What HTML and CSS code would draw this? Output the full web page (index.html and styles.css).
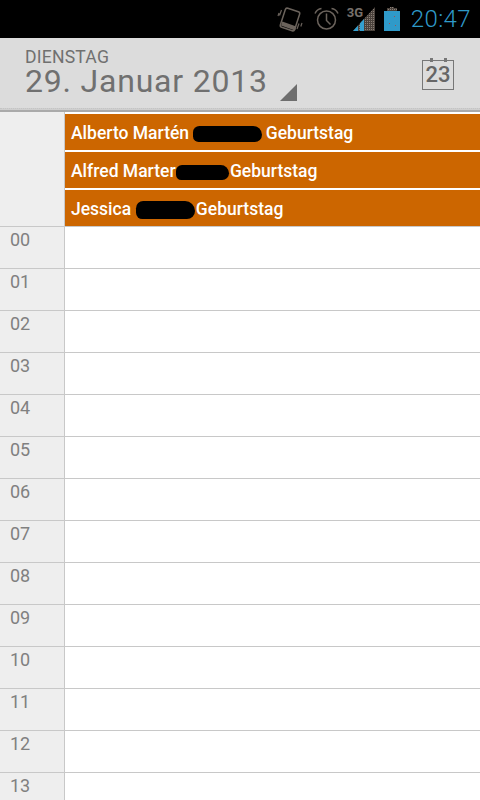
FILE: index.html
```html
<!DOCTYPE html>
<html lang="de">
<head>
  <meta charset="UTF-8" />
  <meta name="viewport" content="width=device-width, initial-scale=1.0"/>
  <title>Kalender</title>
  <link rel="stylesheet" href="styles.css">
</head>
<body>
  <div class="statusbar">
    <svg class="ic-rotate" width="26" height="28" viewBox="0 0 26 28" fill="none" stroke="#6b635c">
      <rect x="5.500" y="4.500" width="15" height="20" rx="2" transform="rotate(18 13 14.500)" stroke-width="1.500"/>
      <path d="M4 20.500l14 5 1.300-4-14-5z" fill="#6b635c" stroke="none"/>
      <path d="M4.500 5l-2 5.500M2 8l-1 3M22 18.500l-2 5.500M25 18l-1.200 3.500" stroke-width="1.200"/>
    </svg>
    <svg class="ic-alarm" width="25" height="26" viewBox="0 0 25 26" fill="none" stroke="#6b635c" stroke-width="1.500">
      <circle cx="12.500" cy="14" r="9"/>
      <path d="M12.500 7.500v7l4 4"/>
      <path d="M1 7.500Q3 3 7.500 2.500M24 7.500Q22 3 17.500 2.500"/>
    </svg>
    <div class="signal">
      <span class="net">3G</span>
      <svg width="22" height="24" viewBox="0 0 22 24">
        <defs>
          <pattern id="dots" width="2" height="2" patternUnits="userSpaceOnUse">
            <rect width="2" height="2" fill="#4a423c"/>
            <rect width="1" height="1" fill="#8a8078"/>
          </pattern>
        </defs>
        <path d="M22 0v24H0z" fill="url(#dots)"/>
        <path d="M0 24l5-5.500V24zM7 24v-7.700l4-4.300V24z" fill="#33a0d0"/>
      </svg>
    </div>
    <svg class="ic-batt" width="16" height="24" viewBox="0 0 16 24">
      <path d="M3 4V1h3V0h4v1h3v3h3v4H0V4z" fill="url(#dots)"/>
      <rect y="4" width="16" height="20" fill="#2f9ac9"/>
      <rect x="10" y="9" width="1" height="1" fill="#a05050"/>
      <rect x="5" y="16" width="1" height="1" fill="#a05050"/>
      <rect x="11" y="18" width="1" height="1" fill="#a05050"/>
    </svg>
    <span class="clock">20:47</span>
  </div>

  <div class="header">
    <div class="date-box">
      <div class="weekday">DIENSTAG</div>
      <div class="date">29. Januar 2013</div>
    </div>
    <div class="corner"></div>
    <div class="today-icon">
      <span class="peg peg-l"></span>
      <span class="peg peg-r"></span>
      23
    </div>
  </div>
  <div class="header-rule"></div>

  <div class="allday">
    <div class="allday-gutter"></div>
    <div class="events">
      <div class="event">Alberto Martén <span class="blot blot-1"></span> Geburtstag</div>
      <div class="event">Alfred Marter<span class="blot blot-2"></span> Geburtstag</div>
      <div class="event">Jessica <span class="blot blot-3"></span> Geburtstag</div>
    </div>
  </div>

  <div class="hours">
    <div class="hour"><div class="label">00</div><div class="slot"></div></div>
    <div class="hour"><div class="label">01</div><div class="slot"></div></div>
    <div class="hour"><div class="label">02</div><div class="slot"></div></div>
    <div class="hour"><div class="label">03</div><div class="slot"></div></div>
    <div class="hour"><div class="label">04</div><div class="slot"></div></div>
    <div class="hour"><div class="label">05</div><div class="slot"></div></div>
    <div class="hour"><div class="label">06</div><div class="slot"></div></div>
    <div class="hour"><div class="label">07</div><div class="slot"></div></div>
    <div class="hour"><div class="label">08</div><div class="slot"></div></div>
    <div class="hour"><div class="label">09</div><div class="slot"></div></div>
    <div class="hour"><div class="label">10</div><div class="slot"></div></div>
    <div class="hour"><div class="label">11</div><div class="slot"></div></div>
    <div class="hour"><div class="label">12</div><div class="slot"></div></div>
    <div class="hour"><div class="label">13</div><div class="slot"></div></div>
  </div>
</body>
</html>
```

FILE: styles.css
```css
html, body {
  margin: 0;
  padding: 0;
  height: 800px;
  overflow: hidden;
  background-color: white;
  font-family: Roboto, "Liberation Sans", sans-serif;
}

.statusbar {
  display: flex;
  align-items: center;
  justify-content: flex-end;
  height: 38px;
  background-color: black;
  padding-right: 9px;
}

.ic-rotate {
  margin-right: 11px;
}

.ic-alarm {
  margin-right: 8px;
}

.signal {
  display: flex;
  position: relative;
  width: 28px;
  height: 24px;
  justify-content: flex-end;
  margin-right: 9px;
}

.net {
  position: absolute;
  left: 0;
  top: -2px;
  color: #77716b;
  font-size: 13px;
  font-weight: bold;
}

.ic-batt {
  margin-right: 11px;
}

.clock {
  color: #2f9ac9;
  font-size: 24px;
  font-weight: 300;
  letter-spacing: 0.4px;
}

.header {
  display: flex;
  height: 70px;
  background-color: #dcdcdc;
  position: relative;
}

.header-rule {
  height: 1px;
  background-color: #cfcfcf;
  border-top: 1px dotted #c4c4c4;
  border-bottom: 2px solid #aaa;
}

.date-box {
  padding: 11px 0 0 25px;
  color: #707070;
}

.weekday {
  font-size: 17.6px;
  line-height: 17px;
  letter-spacing: 0.2px;
}

.date {
  font-size: 32px;
  line-height: 30px;
  letter-spacing: 0.8px;
}

.corner {
  position: absolute;
  left: 280px;
  top: 46px;
  width: 0;
  height: 0;
  border-style: solid;
  border-width: 0 0 17px 17px;
  border-color: transparent transparent #6e6e6e transparent;
}

.today-icon {
  position: absolute;
  left: 422px;
  top: 22px;
  width: 30px;
  height: 28px;
  border: 1px solid #777;
  color: #666;
  font-size: 22px;
  font-weight: 500;
  line-height: 28px;
  text-align: center;
}

.peg {
  position: absolute;
  top: -3px;
  width: 3px;
  height: 4px;
  background-color: #777;
}

.peg-l {
  left: 7px;
}

.peg-r {
  left: 21px;
}

.allday {
  display: flex;
  height: 114px;
  background-color: white;
}

.allday-gutter {
  width: 64px;
  background-color: #eee;
  border-right: 1px solid #c8c8c8;
  flex-shrink: 0;
}

.events {
  flex: 1;
  padding-top: 2px;
  display: flex;
  flex-direction: column;
  gap: 2px;
}

.event {
  height: 36px;
  line-height: 39px;
  background-color: #cc6600;
  color: white;
  font-size: 17.5px;
  font-weight: 500;
  padding-left: 6px;
  white-space: nowrap;
}

.blot {
  display: inline-block;
  background-color: black;
  border-radius: 8px 11px 9px 7px;
}

.blot-1 {
  width: 69px;
  height: 16px;
  vertical-align: -3px;
  margin-right: -1px;
}

.blot-2 {
  width: 53px;
  height: 15px;
  vertical-align: -3px;
  margin-right: -3px;
}

.blot-3 {
  width: 59px;
  height: 18px;
  vertical-align: -4px;
  margin-right: -3px;
}

.hours {
  border-top: 1px solid #c8c8c8;
}

.hour {
  display: flex;
  height: 41px;
  border-bottom: 1px solid #c8c8c8;
}

.label {
  width: 54px;
  flex-shrink: 0;
  padding-left: 10px;
  background-color: #eee;
  border-right: 1px solid #c8c8c8;
  color: #808080;
  font-size: 18px;
  line-height: 26px;
}

.slot {
  flex: 1;
}
```
